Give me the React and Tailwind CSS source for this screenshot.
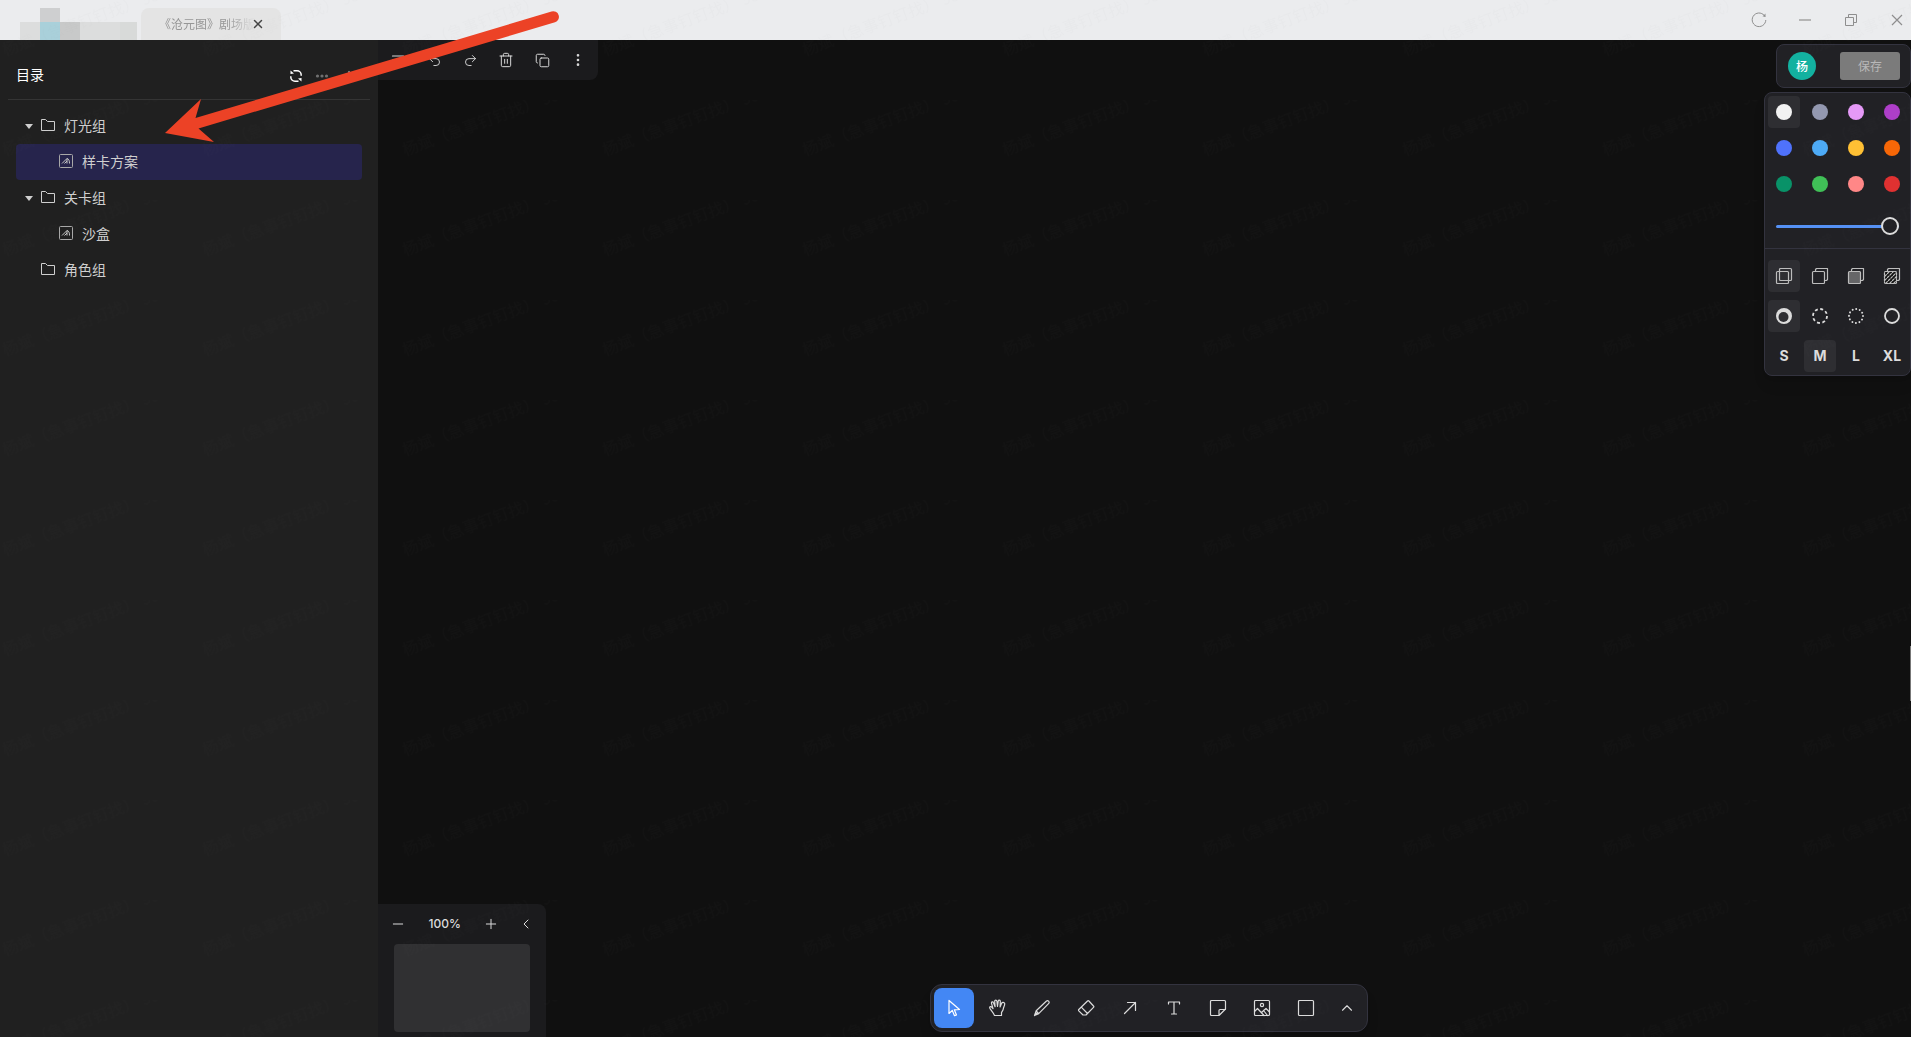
import { useState } from 'react';
import { ChevronLeft, ChevronUp, Copy, Minus, MoreVertical, Plus, Redo2, Trash2, Undo2, X } from 'lucide-react';

const COLORS = [
  { name: 'white', cls: 'bg-[#f2f2f2]' },
  { name: 'grey', cls: 'bg-[#9398b0]' },
  { name: 'light violet', cls: 'bg-[#e599f7]' },
  { name: 'violet', cls: 'bg-[#ae3ec9]' },
  { name: 'blue', cls: 'bg-[#4f72fc]' },
  { name: 'light blue', cls: 'bg-[#4dabf7]' },
  { name: 'yellow', cls: 'bg-[#ffc034]' },
  { name: 'orange', cls: 'bg-[#f76707]' },
  { name: 'green', cls: 'bg-[#099268]' },
  { name: 'light green', cls: 'bg-[#40c057]' },
  { name: 'light red', cls: 'bg-[#ff8787]' },
  { name: 'red', cls: 'bg-[#e03131]' },
];

const TREE = [
  { id: 'light', label: '灯光组', children: [{ id: 'card', label: '样卡方案' }] },
  { id: 'level', label: '关卡组', children: [{ id: 'sandbox', label: '沙盒' }] },
  { id: 'role', label: '角色组' },
];

/* ---------- icons ---------- */

function FolderIcon() {
  return (
    <svg width="16" height="16" viewBox="0 0 16 16" fill="none" stroke="#cfcfcf" strokeWidth="1" className="shrink-0">
      <path d="M1.5 12.5v-11h4l2 2h7v9z" />
    </svg>
  );
}

function BoardIcon() {
  return (
    <svg width="14" height="14" viewBox="0 0 14 14" fill="none" stroke="#a8a8a8" className="shrink-0">
      <rect x="0.5" y="0.5" width="13" height="13" rx="1" />
      <path d="M3 9.500L8 4.500V9.500M5.500 9.500L8 7M8 4.500c2 .5 2.500 2.500 2.500 5" stroke="#c8c8c8" />
    </svg>
  );
}

function RefreshIcon() {
  return (
    <svg width="14" height="14" viewBox="0 0 14 14" fill="none" stroke="#fff" strokeWidth="1.500">
      <path d="M4.500 1.800H8a4.200 4.200 0 0 1 4.200 4.200v.8M9.500 12.200H6A4.200 4.200 0 0 1 1.800 8v-.8" />
      <path d="M1.500 5V1.500L5 4.500zM12.500 9v3.500L9 9.500z" fill="#fff" stroke="none" />
    </svg>
  );
}

function Svg({ children, size = 18, w = 1.2 }) {
  return (
    <svg width={size} height={size} viewBox="0 0 18 18" fill="none" stroke="currentColor" strokeWidth={w} strokeLinejoin="round" strokeLinecap="round">
      {children}
    </svg>
  );
}

const TOOLS = [
  { name: '选择', icon: <path d="M4 1.500v13l3.300-3.100 2.200 5.300 2-.8-2.200-5.100 5.200-.3z" /> },
  {
    name: '抓手',
    icon: <path d="M5.500 16.500C4.500 13.500 1 10.500.7 8.800c-.2-1.300 1.300-1.500 2-.6l1.300 1.500L2.500 4.300c-.3-1.500 1.500-2 2-.6l1.600 4-.4-5.500c0-1.500 2-1.500 2.200 0l.6 5.200.7-5.200c.3-1.500 2.200-1.200 2.100.2l-.2 5.500 1.600-3.800c.7-1.300 2.400-.8 2.900.2.6 1.300-.9 3.500-1.300 5.500-.3 1.600-1.200 2.600-1.800 3.700v3z" />,
  },
  { name: '画笔', icon: <path d="M1.500 16.500l1.700-4.700L13.500 2a1.300 1.300 0 0 1 1.900 0l.4.400a1.300 1.300 0 0 1 0 1.900L5.700 14.600zM3.200 11.800l2.500 2.800M1.500 16.500l2.500-2.500" /> },
  { name: '橡皮', icon: <path d="M1.800 10.500L10.500 2a1 1 0 0 1 1.400 0L16.500 7a1 1 0 0 1 0 1.400L9 16H6l-4.200-4.200a1 1 0 0 1 0-1.300zM4.300 8.200L10.500 14.500" /> },
  { name: '箭头', icon: <path d="M3.500 14.500l11-11M6.500 3.500h8v8" /> },
  { name: '文字', icon: <path d="M3.500 5V3h11v2M9 3v12M6.500 15h5" /> },
  { name: '便签', icon: <path d="M2.500 1.500h13a1 1 0 0 1 1 1V10l-6.500 6.500H2.500a1 1 0 0 1-1-1v-13a1 1 0 0 1 1-1zM16.500 10.500H11a1 1 0 0 0-1 1v5" /> },
  {
    name: '图片',
    icon: (
      <>
        <rect x="1.500" y="1.500" width="15" height="15" rx="1" />
        <circle cx="9" cy="6" r="1.600" />
        <path d="M1.500 12.500l3-3 6.500 7M8.500 13.500l4.500-4 3.500 3.500M10.500 11.500l4 5" />
      </>
    ),
  },
  { name: '矩形', icon: <rect x="1.500" y="1.500" width="15" height="15" rx="1" /> },
];

const FILLS = [
  {
    name: '无填充',
    icon: (
      <>
        <rect x="1.500" y="4.500" width="12" height="12" rx="1" />
        <rect x="4.500" y="1.500" width="12" height="12" rx="1" />
      </>
    ),
  },
  {
    name: '半填充',
    icon: (
      <>
        <rect x="1.500" y="4.500" width="12" height="12" rx="1" />
        <path d="M4.500 4.500v-2l1-1h11v11l-1 1h-2" />
      </>
    ),
  },
  {
    name: '纯色',
    icon: (
      <>
        <rect x="1.500" y="4.500" width="12" height="12" rx="1" fill="#666668" />
        <path d="M4.500 4.500v-2l1-1h11v11l-1 1h-2" />
      </>
    ),
  },
  {
    name: '花纹',
    icon: (
      <>
        <rect x="1.500" y="4.500" width="12" height="12" rx="1" fill="#111" strokeDasharray="2 1" />
        <path d="M2 9l4-4M2 13l8-8M3 16L13 6M7 16l6-6M11 16l2-2" strokeDasharray="2 1.500" />
        <path d="M4.500 4.500v-2l1-1h11v11l-1 1h-2" />
      </>
    ),
  },
];

const DASHES = [
  {
    name: '手绘',
    icon: (
      <>
        <circle cx="9" cy="9" r="8" fill="currentColor" stroke="none" />
        <circle cx="8.500" cy="10" r="5" fill="#2e2e32" stroke="none" />
      </>
    ),
  },
  { name: '虚线', icon: <circle cx="9" cy="9" r="7" strokeWidth="1.800" strokeDasharray="3 2.500" strokeLinecap="butt" /> },
  { name: '点线', icon: <circle cx="9" cy="9" r="7" strokeWidth="1.900" strokeDasharray="0.100 3.560" /> },
  { name: '实线', icon: <circle cx="9" cy="9" r="7" strokeWidth="1.800" /> },
];

/* ---------- window chrome ---------- */

function TitleBar() {
  return (
    <header className="flex h-10 shrink-0 items-end bg-[#ebecee]">
      <svg width="117" height="32" viewBox="0 0 117 32" className="ml-5 shrink-0">
        <path d="M20 0h20v14H20z" fill="#cecfd0" />
        <path d="M0 14h20v18H0z" fill="#dcdddd" />
        <path d="M20 14h20v18H20z" fill="#a9d0da" />
        <path d="M40 14h20v18H40z" fill="#c8c9c9" />
        <path d="M60 14h40v18H60z" fill="#dcdddd" />
        <path d="M100 14h17v18h-17z" fill="#d8dad9" />
      </svg>
      <div className="ml-1 flex h-8 w-[140px] items-center rounded-t-lg bg-[#e4e4e4] pl-[18px] text-xs text-[#969696]">
        <span className="whitespace-nowrap [mask-image:linear-gradient(to_right,black_70%,transparent)]">《沧元图》剧场版</span>
        <button aria-label="关闭标签" className="-ml-1 text-[#444]">
          <X size={14} strokeWidth={2.5} />
        </button>
      </div>
      <div className="ml-auto flex h-10 items-center gap-[30px] pr-[6px] text-[#8e8e8e]">
        <button aria-label="刷新">
          <svg width="16" height="16" viewBox="0 0 16 16" fill="none" stroke="currentColor">
            <path d="M14.200 5A6.800 6.800 0 1 0 14.800 8" />
            <path d="M14.500 1.500v3h-3z" fill="currentColor" stroke="none" />
          </svg>
        </button>
        <button aria-label="最小化">
          <svg width="16" height="16" viewBox="0 0 16 16" stroke="#b5b5b5" strokeWidth="2">
            <path d="M2 8h12" />
          </svg>
        </button>
        <button aria-label="还原">
          <svg width="16" height="16" viewBox="0 0 16 16" fill="none" stroke="currentColor">
            <path d="M2.500 5.500h8v8h-8zM5.500 5.500v-3h8v8h-3" />
          </svg>
        </button>
        <button aria-label="关闭">
          <svg width="16" height="16" viewBox="0 0 16 16" stroke="currentColor" strokeWidth="1.200">
            <path d="M3 3l10 10M13 3L3 13" />
          </svg>
        </button>
      </div>
    </header>
  );
}

/* ---------- sidebar ---------- */

function Sidebar() {
  const [selected, setSelected] = useState('card');

  return (
    <aside className="w-[378px] shrink-0 bg-[#202020]">
      <div className="mx-2 flex h-[60px] items-center border-b border-[#343434] pt-3 pr-[13px] pl-2">
        <h1 className="pb-1 text-sm text-white">目录</h1>
        <div className="ml-auto flex items-center gap-[11px]">
          <button aria-label="同步"><RefreshIcon /></button>
          <button aria-label="更多">
            <svg width="16" height="16" viewBox="0 0 16 16" fill="#707070">
              <circle cx="3.500" cy="8" r="1.600" />
              <circle cx="8" cy="8" r="1.600" />
              <circle cx="12.500" cy="8" r="1.600" />
            </svg>
          </button>
          <button aria-label="新建" className="text-[#d0d0d0]"><Plus size={16} strokeWidth={1.5} /></button>
        </div>
      </div>
      <ul className="px-4 pt-2 text-sm text-[#cfcfcf]">
        {TREE.map((group) => (
          <li key={group.id}>
            <button className="flex h-9 w-full items-center pl-2">
              <span className="flex w-4 shrink-0">
                {group.children && (
                  <svg width="10" height="10" viewBox="0 0 10 10" fill="#cfcfcf">
                    <path d="M1 3h8L5 8z" />
                  </svg>
                )}
              </span>
              <FolderIcon />
              <span className="ml-2 pb-[2px]">{group.label}</span>
            </button>
            {group.children && (
              <ul>
                {group.children.map((item) => (
                  <li key={item.id}>
                    <button
                      onClick={() => setSelected(item.id)}
                      className={`flex h-9 w-full items-center rounded pb-[2px] pl-[43px] ${selected === item.id ? 'bg-[#26244c]' : ''}`}
                    >
                      <BoardIcon />
                      <span className="ml-[9px]">{item.label}</span>
                    </button>
                  </li>
                ))}
              </ul>
            )}
          </li>
        ))}
      </ul>
    </aside>
  );
}

/* ---------- canvas panels ---------- */

function ActionBar() {
  const btn = 'flex size-9 items-center justify-center';
  return (
    <div className="absolute top-0 left-0 flex h-10 items-center rounded-br-lg bg-[#1b1b1d] px-[2px] text-[#d8d8d8]">
      <button aria-label="菜单" className={btn}>
        <Svg><path d="M3.500 5h11M3.500 9h11M3.500 13h11" /></Svg>
      </button>
      <button aria-label="撤销" className={btn}><Undo2 size={15} strokeWidth={1.5} /></button>
      <button aria-label="重做" className={btn}><Redo2 size={15} strokeWidth={1.5} /></button>
      <button aria-label="删除" className={btn}><Trash2 size={16} strokeWidth={1.5} /></button>
      <button aria-label="复制" className={btn}><Copy size={15} strokeWidth={1.6} /></button>
      <button aria-label="更多操作" className={btn}><MoreVertical size={16} strokeWidth={2} /></button>
    </div>
  );
}

function StylePanel() {
  const cell = 'flex size-8 items-center justify-center rounded';
  const [color, setColor] = useState('white');
  const [fill, setFill] = useState('无填充');
  const [dash, setDash] = useState('手绘');
  const [size, setSize] = useState('M');

  return (
    <div className="rounded-lg border border-[#33333f] bg-[#212125] text-[#dcdcdc] shadow-lg">
      <div className="grid grid-cols-4 gap-1 pt-[3px] pr-[2px] pl-[3px]">
        {COLORS.map((c) => (
          <button key={c.name} aria-label={c.name} onClick={() => setColor(c.name)} className={`${cell} ${color === c.name ? 'bg-[#2e2e32]' : ''}`}>
            <span className={`size-4 rounded-full ${c.cls}`} />
          </button>
        ))}
      </div>
      <div className="flex h-[49px] items-center border-b border-[#33333f] px-[11px] pt-1">
        <input
          type="range"
          aria-label="不透明度"
          min="0"
          max="4"
          defaultValue="4"
          className="h-[18px] w-0 flex-1 appearance-none bg-transparent [&::-webkit-slider-runnable-track]:h-[3px] [&::-webkit-slider-runnable-track]:rounded-full [&::-webkit-slider-runnable-track]:bg-[#5591f5] [&::-webkit-slider-thumb]:-mt-[8px] [&::-webkit-slider-thumb]:size-[18px] [&::-webkit-slider-thumb]:appearance-none [&::-webkit-slider-thumb]:rounded-full [&::-webkit-slider-thumb]:border-2 [&::-webkit-slider-thumb]:border-solid [&::-webkit-slider-thumb]:border-[#dcdcdc] [&::-webkit-slider-thumb]:bg-[#212125]"
        />
      </div>
      <div className="grid grid-cols-4 gap-x-1 gap-y-2 pt-[11px] pr-[2px] pb-[3px] pl-[3px]">
        {FILLS.map((f) => (
          <button key={f.name} aria-label={f.name} onClick={() => setFill(f.name)} className={`${cell} text-[#bdbdbd] ${fill === f.name ? 'bg-[#2e2e32]' : ''}`}>
            <Svg>{f.icon}</Svg>
          </button>
        ))}
        {DASHES.map((d) => (
          <button key={d.name} aria-label={d.name} onClick={() => setDash(d.name)} className={`${cell} ${dash === d.name ? 'bg-[#2e2e32]' : ''}`}>
            <Svg>{d.icon}</Svg>
          </button>
        ))}
        {['S', 'M', 'L', 'XL'].map((s) => (
          <button key={s} onClick={() => setSize(s)} className={`${cell} font-[Inter] text-sm font-bold ${size === s ? 'bg-[#2e2e32]' : ''}`}>
            {s}
          </button>
        ))}
      </div>
    </div>
  );
}

function ZoomPanel() {
  return (
    <div className="absolute bottom-0 left-0 rounded-tr-lg bg-[#1b1b1d] px-4 pb-[5px] text-[#dcdcdc]">
      <div className="flex h-10 items-center justify-between">
        <button aria-label="缩小" className="-ml-1"><Minus size={16} strokeWidth={1.5} /></button>
        <span className="ml-1 text-xs font-medium font-[Inter]">100%</span>
        <button aria-label="放大" className="ml-1"><Plus size={16} strokeWidth={1.5} /></button>
        <button aria-label="收起缩略图" className="-mr-1"><ChevronLeft size={16} strokeWidth={1.5} /></button>
      </div>
      <div className="h-[88px] w-[136px] rounded bg-[#303032]" />
    </div>
  );
}

function ToolBar() {
  const [tool, setTool] = useState('选择');
  return (
    <div className="absolute inset-x-0 bottom-[5px] flex justify-center pl-[9px]">
      <div className="flex h-12 items-center gap-1 rounded-xl border border-[#33333f] bg-[#212125] px-[3px] text-[#dcdcdc] shadow-lg">
        {TOOLS.map((t) => (
          <button
            key={t.name}
            aria-label={t.name}
            onClick={() => setTool(t.name)}
            className={`flex size-10 items-center justify-center rounded-lg ${tool === t.name ? 'bg-[#4387f4] text-white' : ''}`}
          >
            <Svg>{t.icon}</Svg>
          </button>
        ))}
        <button aria-label="更多工具" className="flex h-10 w-[34px] items-center justify-center">
          <ChevronUp size={18} strokeWidth={1.5} />
        </button>
      </div>
    </div>
  );
}

/* ---------- overlays ---------- */

function Watermark() {
  return (
    <svg className="pointer-events-none absolute inset-0 size-full">
      <defs>
        <pattern id="wm" width="200" height="100" patternUnits="userSpaceOnUse">
          <text x="5" y="56" transform="rotate(-20 5 56)" fontSize="16" fill="#808080" fillOpacity="0.025" className="whitespace-pre">
            杨斌（急事钉钉找） 9816
          </text>
        </pattern>
      </defs>
      <rect width="100%" height="100%" fill="url(#wm)" />
    </svg>
  );
}

function Arrow() {
  return (
    <svg width="560" height="150" viewBox="0 0 560 150" fill="#ec4226" className="pointer-events-none absolute top-0 left-0">
      <path d="M165 133L201 99L195.500 118L551.500 11.500A5.600 5.600 0 0 1 555 22.300L198.500 128.500L214 142z" />
    </svg>
  );
}

export default function App() {
  return (
    <div className="relative flex h-screen flex-col overflow-hidden bg-[#101010] font-['Noto_Sans_CJK_SC',sans-serif]">
      <TitleBar />
      <div className="flex min-h-0 flex-1">
        <Sidebar />
        <main className="relative min-w-0 flex-1">
          <ActionBar />
          <ZoomPanel />
          <ToolBar />
          <div className="absolute top-1 right-0 flex flex-col items-end gap-1">
            <div className="flex h-11 items-center rounded-lg border border-[#33333f] bg-[#212125] pr-[10px] pl-[11px]">
              <span className="flex size-7 items-center justify-center rounded-full bg-[#13b1a0] text-xs font-medium text-white">杨</span>
              <button className="ml-6 h-7 w-[60px] rounded-[3px] bg-[#7b7b7b] text-xs text-[#b8b8b8]">保存</button>
            </div>
            <StylePanel />
          </div>
          <div className="absolute top-[606px] right-0 h-[55px] w-px bg-[#777]" />
        </main>
      </div>
      <Watermark />
      <Arrow />
    </div>
  );
}
